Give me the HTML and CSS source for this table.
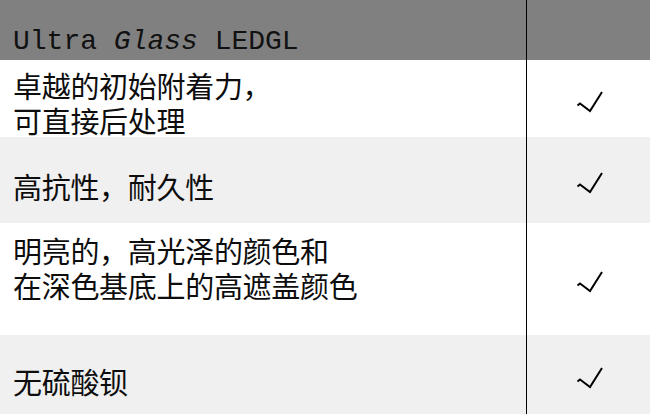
FILE: index.html
```html
<!DOCTYPE html>
<html lang="zh-CN">
<head>
<meta charset="utf-8">
<title>Ultra Glass LEDGL</title>
<link rel="stylesheet" href="styles.css">
</head>
<body>
<div class="table">
  <div class="row head">
    <div class="label head-label">Ultra <i>Glass</i> LEDGL</div>
    <div class="mark"></div>
  </div>
  <div class="row r1">
    <div class="label">卓越的初始附着力，<br>可直接后处理</div>
    <div class="mark"><svg class="check" viewBox="0 0 28 22" width="28" height="22"><polyline points="1.5,14.5 4,12.5 14,20 26,1" /></svg></div>
  </div>
  <div class="row r2 shaded">
    <div class="label">高抗性，耐久性</div>
    <div class="mark"><svg class="check" viewBox="0 0 28 22" width="28" height="22"><polyline points="1.5,14.5 4,12.5 14,20 26,1" /></svg></div>
  </div>
  <div class="row r3">
    <div class="label">明亮的，高光泽的颜色和<br>在深色基底上的高遮盖颜色</div>
    <div class="mark"><svg class="check" viewBox="0 0 28 22" width="28" height="22"><polyline points="1.5,14.5 4,12.5 14,20 26,1" /></svg></div>
  </div>
  <div class="row r4 shaded">
    <div class="label">无硫酸钡</div>
    <div class="mark"><svg class="check" viewBox="0 0 28 22" width="28" height="22"><polyline points="1.5,14.5 4,12.5 14,20 26,1" /></svg></div>
  </div>
</div>
</body>
</html>
```

FILE: styles.css
```css
html, body {
  margin: 0;
  padding: 0;
  background: #ffffff;
}

.table {
  width: 650px;
  height: 414px;
  display: flex;
  flex-direction: column;
  font-family: "Noto Sans CJK SC", "Noto Sans", sans-serif;
  color: #0d0d0d;
}

.row {
  display: flex;
  background: #ffffff;
}

.shaded {
  background: #f0f0f0;
}

.label {
  width: 526px;
  box-sizing: border-box;
  padding-left: 13px;
  font-size: 29px;
  line-height: 35px;
  letter-spacing: -0.3px;
  font-weight: 400;
}

.mark {
  flex: 1;
  border-left: 1px solid #000000;
  display: flex;
  justify-content: center;
  align-items: center;
  padding-top: 6px;
  padding-left: 3px;
}

.check {
  display: block;
  fill: none;
  stroke: #000000;
  stroke-width: 2;
  stroke-linejoin: miter;
  stroke-linecap: butt;
}

.head {
  height: 60px;
  background: #808080;
}

.head-label {
  font-family: "Liberation Mono", "DejaVu Sans Mono", monospace;
  font-size: 28px;
  line-height: 34px;
  padding-top: 25px;
  letter-spacing: 0;
  color: #111111;
}

.head-label i {
  font-style: italic;
}

.r1 { height: 77px; }
.r1 .label { padding-top: 8px; }

.r2 { height: 86px; }
.r2 .label { padding-top: 32px; }

.r3 { height: 112px; }
.r3 .label { padding-top: 10px; }

.r4 { height: 79px; }
.r4 .label { padding-top: 29px; }
```
